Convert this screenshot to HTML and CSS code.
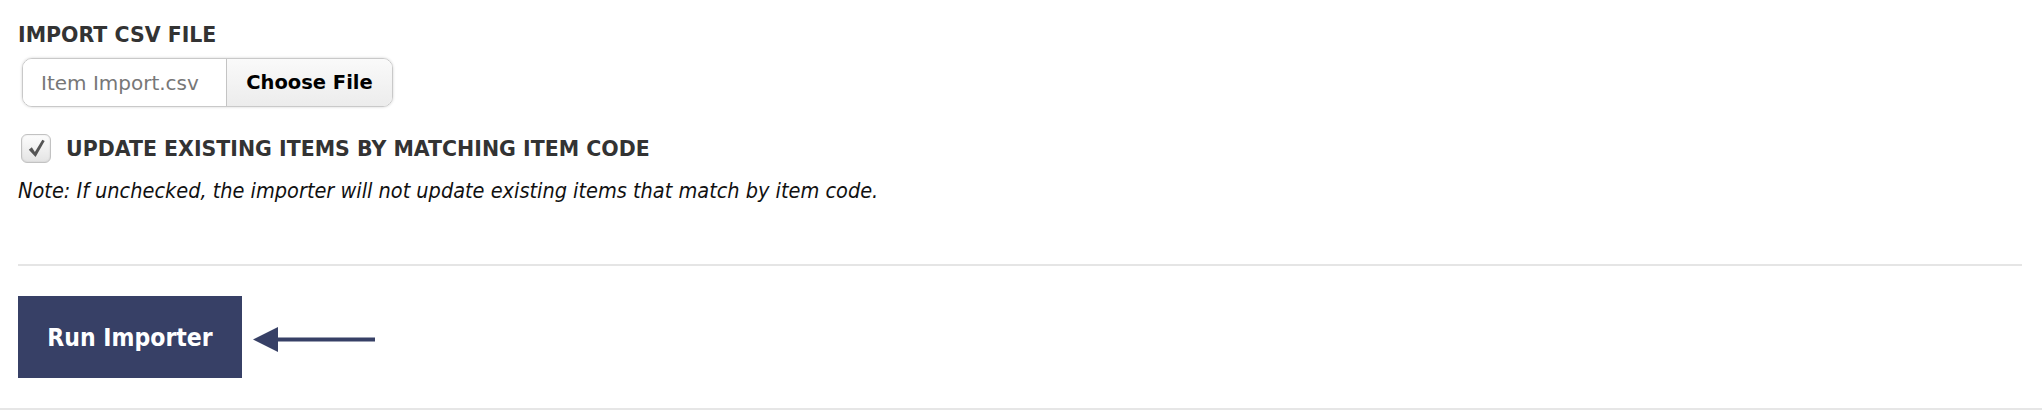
FILE: index.html
```html
<!DOCTYPE html>
<html lang="en">
<head>
    <meta charset="UTF-8" />
    <title>Item Importer</title>
    <link rel="stylesheet" href="styles.css">
</head>
<body>

<div class="importer">
    <div class="import-form">
        <label class="field-label" for="csv-file">IMPORT CSV FILE</label>
        <div class="file-picker" id="csv-file">
            <span class="file-name">Item Import.csv</span>
            <span class="file-btn">Choose File</span>
        </div>

        <label class="check-row">
            <span class="check-box">
                <svg width="21" height="21" viewBox="0 0 18 18">
                    <path d="M2.4 10 L5 8 L7.6 12 L14 1.4 L16 2.6 L8.2 16.2 Z" fill="#555"/>
                </svg>
            </span>
            <span class="check-text">UPDATE EXISTING ITEMS BY MATCHING ITEM CODE</span>
        </label>
        <p class="note">Note: If unchecked, the importer will not update existing items that match by item code.</p>
    </div>

    <hr class="divider">

    <div class="actions">
        <button class="run-btn">Run Importer</button>
        <svg class="hint-arrow" width="124" height="26" viewBox="0 0 124 26">
            <path d="M0 12.5 L25 0 L25 25 Z" fill="#374066"/>
            <rect x="24" y="10.5" width="98" height="4" fill="#374066"/>
        </svg>
    </div>
</div>

</body>
</html>
```

FILE: styles.css
```css
body {
    margin: 0;
    font-family: "DejaVu Sans", sans-serif;
    color: #333;
    background: #fff;
}

.importer {
    padding: 0 20px 30px 18px;
    border-bottom: 2px solid #e6e6e6;
}

.import-form {
    padding-top: 23px;
}

.field-label {
    display: block;
    font-size: 20.5px;
    line-height: 24px;
    font-weight: bold;
    color: #333;
}

.file-picker {
    display: flex;
    width: 371px;
    height: 49px;
    margin: 11px 0 0 4px;
    box-sizing: border-box;
    border: 1px solid #c9c9c9;
    border-radius: 10px;
    box-shadow: 0 0 3px rgba(0, 0, 0, 0.18);
    overflow: hidden;
}

.file-name {
    width: 204px;
    padding-left: 18px;
    box-sizing: border-box;
    display: flex;
    align-items: center;
    font-size: 20px;
    color: #777;
    background: #fff;
    border-right: 1px solid #c4c4c4;
}

.file-btn {
    flex: 1;
    display: flex;
    align-items: center;
    justify-content: center;
    font-size: 19.5px;
    font-weight: bold;
    color: #000;
    background: linear-gradient(#fafafa, #ececec);
}

.check-row {
    display: flex;
    align-items: center;
    gap: 15px;
    margin: 27px 0 0 3px;
}

.check-box {
    width: 30px;
    height: 29px;
    box-sizing: border-box;
    border: 1px solid #c2c2c2;
    border-radius: 6px;
    background: linear-gradient(#fdfdfd, #e4e4e4);
    box-shadow: inset 0 0 2px rgba(0, 0, 0, 0.12);
    display: flex;
    align-items: center;
    justify-content: center;
}

.check-text {
    font-size: 20.5px;
    line-height: 24px;
    font-weight: bold;
    color: #333;
}

.note {
    margin: 16px 0 0;
    font-family: "DejaVu Sans Condensed", "DejaVu Sans", sans-serif;
    font-size: 21.5px;
    line-height: 24px;
    font-style: italic;
    color: #111;
}

.divider {
    margin: 61px 0 0;
    height: 2px;
    border: 0;
    background: #e5e5e5;
}

.actions {
    display: flex;
    align-items: center;
    gap: 11px;
    margin-top: 30px;
}

.run-btn {
    width: 224px;
    height: 82px;
    border: 0;
    background: #374066;
    color: #fff;
    font-family: "DejaVu Sans Condensed", "DejaVu Sans", sans-serif;
    font-size: 24.5px;
    font-weight: bold;
    cursor: pointer;
}

.hint-arrow {
    margin-top: 5px;
}
```
